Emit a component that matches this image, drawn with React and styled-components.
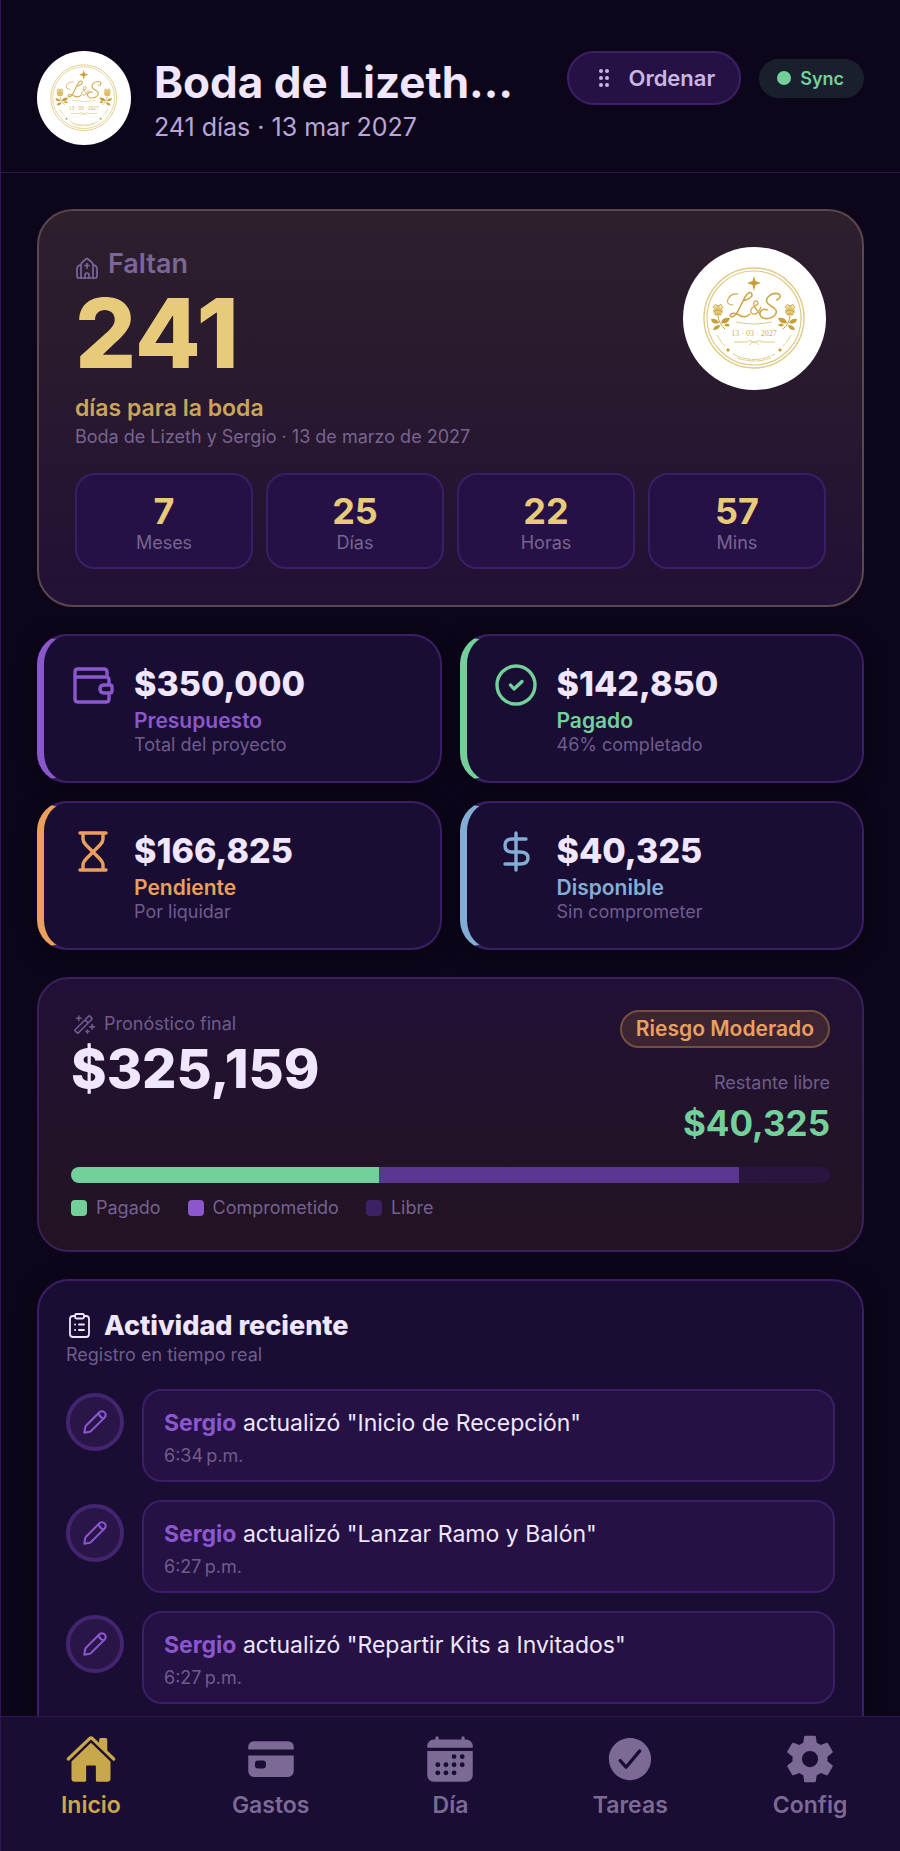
import React from 'react';
import styled, { createGlobalStyle } from 'styled-components';
import { IoHome, IoCard, IoCalendar, IoCheckmarkCircle, IoSettingsSharp } from 'react-icons/io5';
import { PiMagicWand } from 'react-icons/pi';

const GlobalStyle = createGlobalStyle`
	* {
		box-sizing: border-box;
	}
	html, body, #root {
		height: 100%;
	}
	body {
		margin: 0;
		background: #0d061b;
		color: #f0e6ff;
		font-family: Inter, "Noto Sans", sans-serif;
	}
	h1, h2, p, ul {
		margin: 0;
		padding: 0;
	}
`;

const Screen = styled.div`
	display: flex;
	flex-direction: column;
	height: 100vh;
	border-left: 1px solid #2f1755;
`;

const Header = styled.header`
	display: flex;
	align-items: flex-start;
	gap: 23px;
	padding: 51px 36px 26px;
	border-bottom: 1px solid #2c1747;
`;

const Avatar = styled.div`
	flex: none;
	width: ${props => props.$size}px;
	height: ${props => props.$size}px;
	border-radius: 50%;
	background: #fff;
	overflow: hidden;

	svg {
		display: block;
		width: 100%;
		height: 100%;
	}
`;

const HeaderText = styled.div`
	flex: 1;
	min-width: 0;
`;

const Title = styled.h1`
	padding-top: 5px;
	font-size: 44px;
	line-height: 52px;
	font-weight: 700;
	white-space: nowrap;
	overflow: hidden;
	text-overflow: ellipsis;
`;

const Subtitle = styled.p`
	font-size: 25px;
	line-height: 38px;
	color: #b9a6d9;
`;

const HeaderActions = styled.div`
	display: flex;
	align-items: center;
	gap: 18px;
`;

const SortButton = styled.button`
	display: flex;
	align-items: center;
	gap: 18px;
	height: 54px;
	padding: 0 24px 0 29px;
	border: 2px solid #3d2068;
	border-radius: 27px;
	background: #261145;
	color: #c9b6e4;
	font-family: inherit;
	font-size: 22px;
	font-weight: 600;
	cursor: pointer;
`;

const SyncBadge = styled.span`
	display: flex;
	align-items: center;
	gap: 9px;
	height: 39px;
	padding: 0 20px 0 18px;
	border-radius: 20px;
	background: #1a1f2e;
	color: #74d09a;
	font-size: 18px;
	font-weight: 600;
`;

const Dot = styled.i`
	width: 14px;
	height: 14px;
	border-radius: 50%;
	background: #74d09a;
`;

const Content = styled.main`
	flex: 1;
	min-height: 0;
	overflow: hidden;
	padding: 36px 36px 0;
	display: flex;
	flex-direction: column;
	gap: 27px;

	> * {
		flex: none;
	}
`;

const CountdownCard = styled.section`
	padding: 36px;
	border: 2px solid #5b474d;
	border-radius: 36px;
	background: linear-gradient(180deg, #2d1f2c 0%, #291a2e 40%, #221036 100%);
`;

const CountdownTop = styled.div`
	display: flex;
	justify-content: space-between;
`;

const Eyebrow = styled.div`
	display: flex;
	align-items: center;
	gap: 9px;
	font-size: 27px;
	line-height: 33px;
	font-weight: 600;
	color: #7a6699;

	svg {
		margin-top: 8px;
	}
`;

const BigNumber = styled.div`
	font-size: 96px;
	line-height: 106px;
	font-weight: 800;
	color: #e8cb7a;
`;

const GoldText = styled.p`
	padding-top: 6px;
	font-size: 23px;
	line-height: 33px;
	font-weight: 600;
	color: #c9a55c;
`;

const MutedText = styled.p`
	font-size: 18px;
	line-height: ${props => props.$line || 24}px;
	color: ${props => props.$color || '#6f5c8c'};
`;

const TimeGrid = styled.div`
	display: grid;
	grid-template-columns: repeat(4, 1fr);
	gap: 13px;
	margin-top: 24px;
`;

const TimeBox = styled.div`
	padding: 16px 0 12px;
	border: 2px solid #3a1f66;
	border-radius: 20px;
	background: #251145;
	text-align: center;
`;

const TimeValue = styled.div`
	font-size: 36px;
	line-height: 40px;
	font-weight: 700;
	color: #e8cb7a;
`;

const StatGrid = styled.div`
	display: grid;
	grid-template-columns: 1fr 1fr;
	gap: 18px;
`;

const StatCard = styled.section`
	display: flex;
	gap: 20px;
	padding: 27px 28px 24px;
	border: 2px solid #3a1f66;
	border-left: 7px solid ${props => props.$color};
	border-radius: 30px;
	background: #1a0d33;
	box-shadow: 0 4px 18px rgba(8, 0, 12, 0.6);
	color: ${props => props.$color};
`;

const StatIcon = styled.svg`
	flex: none;
	width: 42px;
	height: 42px;
	overflow: visible;
`;

const StatValue = styled.div`
	font-size: 34px;
	line-height: 42px;
	font-weight: 800;
	color: #f0e6ff;
`;

const StatLabel = styled.div`
	padding-top: 4px;
	font-size: 21px;
	line-height: 24px;
	font-weight: 600;
`;

const ForecastCard = styled.section`
	padding: 31px 32px 29px;
	border: 2px solid #38215a;
	border-radius: 32px;
	background: linear-gradient(180deg, #201036 0%, #221329 60%, #221222 100%);
`;

const ForecastTop = styled.div`
	display: flex;
	justify-content: space-between;
`;

const ForecastLabel = styled.div`
	display: flex;
	align-items: center;
	gap: 8px;
	font-size: 18px;
	line-height: 28px;
	color: #6f5c8c;
`;

const ForecastValue = styled.div`
	font-size: 54px;
	line-height: 62px;
	font-weight: 800;
`;

const ForecastSide = styled.div`
	display: flex;
	flex-direction: column;
	align-items: flex-end;
	text-align: right;
`;

const RiskBadge = styled.span`
	height: 38px;
	margin-bottom: 23px;
	padding: 0 14px;
	border: 2px solid #76503f;
	border-radius: 19px;
	background: #3d2433;
	font-size: 21px;
	line-height: 34px;
	font-weight: 600;
	color: #eb9f5e;
`;

const FreeAmount = styled.div`
	font-size: 35px;
	line-height: 56px;
	font-weight: 700;
	color: #74d09a;
`;

const Bar = styled.div`
	display: flex;
	height: 16px;
	margin-top: 16px;
	border-radius: 8px;
	overflow: hidden;
	background: #291540;
`;

const BarPart = styled.div`
	background: ${props => props.$color};
`;

const Legend = styled.ul`
	display: flex;
	gap: 27px;
	margin-top: 12px;
	list-style: none;
	font-size: 18px;
	line-height: 26px;
	color: #74618f;

	li {
		display: flex;
		align-items: center;
		gap: 9px;
	}
`;

const Swatch = styled.i`
	width: 16px;
	height: 16px;
	border-radius: 4px;
	background: ${props => props.$color};
`;

const ActivityCard = styled.section`
	padding: 27px 27px 60px;
	border: 2px solid #3a1f66;
	border-radius: 32px;
	background: #1a0d33;
	box-shadow: 0 4px 18px rgba(8, 0, 12, 0.6);
`;

const ActivityTitle = styled.h2`
	display: flex;
	align-items: center;
	gap: 11px;
	font-size: 27px;
	line-height: 35px;
	font-weight: 800;
`;

const ActivityList = styled.ul`
	display: flex;
	flex-direction: column;
	gap: 18px;
	margin-top: 22px;
	list-style: none;
`;

const ActivityRow = styled.li`
	display: flex;
	align-items: flex-start;
	gap: 18px;
`;

const ActivityIcon = styled.span`
	display: flex;
	flex: none;
	align-items: center;
	justify-content: center;
	width: 58px;
	height: 58px;
	margin-top: 4px;
	border: 4px solid #43246f;
	border-radius: 50%;
	background: #2a1548;
	color: #8a57cc;
`;

const ActivityBox = styled.div`
	flex: 1;
	padding: 16px 20px 8px;
	border: 2px solid #3a1f66;
	border-radius: 20px;
	background: #261145;
`;

const ActivityText = styled.p`
	font-size: 23px;
	line-height: 32px;

	b {
		font-weight: 700;
		color: #8a57cc;
	}
`;

const TabBar = styled.nav`
	display: flex;
	flex: none;
	height: 135px;
	padding-top: 16px;
	border-top: 1px solid #301550;
	background: #1a0d33;
`;

const Tab = styled.a`
	display: flex;
	flex: 1;
	flex-direction: column;
	align-items: center;
	gap: 6px;
	font-size: 23px;
	line-height: 28px;
	font-weight: 600;
	text-decoration: none;
	color: ${props => props.$active ? '#c9a84c' : '#7c6a96'};

	svg {
		display: block;
		width: 52px;
		height: 52px;
	}
`;

const Rose = () => (
	<g>
		<circle cx="35" cy="64" r="5" fill="#e3c87e" />
		<path d="M30 61 L32 57.500 L35 59 L38 57.500 L40 61 M31 65 Q35 61 39 65 M32 68 Q35 65 38 68" fill="none" stroke="#c8a03a" strokeWidth="1" />
		<path d="M35 69 Q36 77 42 82" fill="none" stroke="#c8a03a" strokeWidth="1" />
		<path d="M36 76 Q29 78 28 72 Q34 71 36 76Z M38 76 Q39 70 47 71 Q45 78 38 76Z M37 78 Q31 78 30 83 Q37 83 37 78Z M41 78 Q44 75 47 78 Q44 81 41 78Z" fill="#c8a03a" />
	</g>
);

const Monogram = () => (
	<svg viewBox="0 0 143 143" role="img" aria-label="L&S 13 03 2027">
		<g fill="none" stroke="#dfca86">
			<circle cx="71" cy="71" r="50" strokeWidth="1.400" />
			<circle cx="71" cy="71" r="47" strokeWidth="1.200" />
			<path d="M53 75 Q71 79 89 75 M51 95 H64 M79 95 H92 M64 95 Q67 92 71 96 Q75 92 79 95 M66 98 Q71 92 76 98" />
			<path d="M34 88 Q38 95 42 99 M108 88 Q104 95 100 99 M50 107 Q71 118 92 107 M54 111 Q71 117 88 111" strokeDasharray="9 1" />
		</g>
		<path d="M71 29 L72.500 34 L78 36 L72.500 38 L71 44 L69.500 38 L64 36 L69.500 34Z M45 101 l2 2 -2 2 -2 -2z M97 101 l2 2 -2 2 -2 -2z" fill="#c8a03a" />
		<g fill="none" stroke="#cda647" strokeWidth="1.600" strokeLinecap="round" strokeLinejoin="round">
			<path d="M50 58 Q43 58 45 52 Q48 46 55 47" strokeWidth="1.100" />
			<path d="M60 54 Q70 51 69 47 Q67 43 62 50 L56 62 Q53 69 49 70 Q46 69 48 67 Q51 65 56 68 Q62 72 67 67" />
			<path d="M94 53 Q99 50 96 47 Q90 45 85 50 Q81 55 88 59 Q96 63 92 68 Q87 73 80 71 Q75 68 78 64 Q81 61 84 63" />
			<path d="M78 60 Q75 68 70 67 Q66 65 69 61 L75 57 Q75 52 71 55 Q69 58 77 67" strokeWidth="1.200" />
		</g>
		<Rose />
		<g transform="translate(142 0) scale(-1 1)">
			<Rose />
		</g>
		<text x="71" y="89" textAnchor="middle" fontFamily="Liberation Serif, serif" fontSize="8" fill="#cfb05c">13 · 03 · 2027</text>
	</svg>
);

const lineProps = {
	fill: 'none',
	stroke: 'currentColor',
	strokeLinecap: 'round',
	strokeLinejoin: 'round',
};

const DragIcon = () => (
	<svg width="12" height="20" viewBox="0 0 12 20" fill="currentColor" aria-hidden="true">
		{[3, 10, 17].map(y => (
			<g key={y}>
				<circle cx="3" cy={y} r="2" />
				<circle cx="9" cy={y} r="2" />
			</g>
		))}
	</svg>
);

const ChurchIcon = () => (
	<svg width="24" height="24" viewBox="0 0 24 24" {...lineProps} strokeWidth="1.700" aria-hidden="true">
		<path d="M6 22 V9 Q6 7 7.500 6 L11 3 Q12 2 13 3 L16.500 6 Q18 7 18 9 V22" />
		<path d="M6 9 H5 Q2 10 2 13 V20 Q2 22 4 22 H20 Q22 22 22 20 V13 Q22 10 19 9 H18" />
		<path d="M10 22 V19 Q10 17 12 17 Q14 17 14 19 V22 M12 7.500 V12 M10 9.500 H14" />
	</svg>
);

const ClipboardIcon = () => (
	<svg width="27" height="27" viewBox="0 0 27 27" {...lineProps} strokeWidth="1.800" aria-hidden="true">
		<path d="M9 4 H7 Q4 4 4 7 V22 Q4 25 7 25 H20 Q23 25 23 22 V7 Q23 4 20 4 H18" />
		<rect x="9" y="2" width="9" height="4.500" rx="1.500" />
		<path d="M13 12.500 H18 M13 18 H18 M9 12.500 H9.100 M9 18 H9.100" />
	</svg>
);

const PencilIcon = () => (
	<svg width="26" height="26" viewBox="0 0 28 28" {...lineProps} strokeWidth="2.200" aria-hidden="true">
		<path d="M2.500 25.500 L3.500 19.500 Q3.800 18.500 4.500 17.800 L18.800 3.500 Q21 1.500 23.500 3 Q27 5.500 24.500 9 L10 23.500 Q9.300 24.200 8.300 24.500 Z" />
		<path d="M18 4.500 Q19 9 23.500 10" />
	</svg>
);

const statIcons = {
	wallet: <path d="M35 14 V9 Q35 6 32 6 H6 Q3 6 3 9 V36 Q3 39 6 39 H34 Q37 39 37 36 V30 M3 14 H34 Q37 14 37 17 V22 M38 22 H32 Q28 22 28 26 Q28 30 32 30 H38 Q40 30 40 28 V24 Q40 22 38 22Z" />,
	check: (
		<>
			<circle cx="21" cy="22" r="19" />
			<path d="M15.500 22 L19 26 L27 18.500" />
		</>
	),
	hourglass: <path d="M8 3 H34 M8 40 H34 M11 3 V9 Q11 12 14 15 L27 28 Q31 32 31 35 V40 M31 3 V9 Q31 12 28 15 L15 28 Q11 32 11 35 V40" />,
	dollar: <path d="M21 3 V40 M31 9 H17 Q10 9 10 15.500 Q10 22 17 22 H25 Q33 22 33 28 Q33 34 25 34 H10" />,
};

const times = [
	{ value: '7', label: 'Meses' },
	{ value: '25', label: 'Días' },
	{ value: '22', label: 'Horas' },
	{ value: '57', label: 'Mins' },
];

const stats = [
	{ icon: 'wallet', value: '$350,000', label: 'Presupuesto', note: 'Total del proyecto', color: '#8a57cc' },
	{ icon: 'check', value: '$142,850', label: 'Pagado', note: '46% completado', color: '#74d09a' },
	{ icon: 'hourglass', value: '$166,825', label: 'Pendiente', note: 'Por liquidar', color: '#eb9f5e' },
	{ icon: 'dollar', value: '$40,325', label: 'Disponible', note: 'Sin comprometer', color: '#84add6' },
];

const budget = { total: 352000, paid: 142850, committed: 166825 };

const activities = [
	{ user: 'Sergio', text: 'actualizó "Inicio de Recepción"', time: '6:34\u202fp.m.' },
	{ user: 'Sergio', text: 'actualizó "Lanzar Ramo y Balón"', time: '6:27\u202fp.m.' },
	{ user: 'Sergio', text: 'actualizó "Repartir Kits a Invitados"', time: '6:27\u202fp.m.' },
];

const tabs = [
	{ label: 'Inicio', href: '#inicio', Icon: IoHome },
	{ label: 'Gastos', href: '#gastos', Icon: IoCard },
	{ label: 'Día', href: '#dia', Icon: IoCalendar },
	{ label: 'Tareas', href: '#tareas', Icon: IoCheckmarkCircle },
	{ label: 'Config', href: '#config', Icon: IoSettingsSharp },
];

const App = () => {
	const percent = (amount) => `${amount / budget.total * 100}%`;

	return (
		<Screen>
			<GlobalStyle />
			<Header>
				<Avatar $size={94}><Monogram /></Avatar>
				<HeaderText>
					<Title>Boda de Lizeth…</Title>
					<Subtitle>241 días · 13 mar 2027</Subtitle>
				</HeaderText>
				<HeaderActions>
					<SortButton type="button"><DragIcon />Ordenar</SortButton>
					<SyncBadge><Dot />Sync</SyncBadge>
				</HeaderActions>
			</Header>

			<Content>
				<CountdownCard>
					<CountdownTop>
						<div>
							<Eyebrow><ChurchIcon />Faltan</Eyebrow>
							<BigNumber>241</BigNumber>
							<GoldText>días para la boda</GoldText>
							<MutedText $color="#78648f">Boda de Lizeth y Sergio · 13 de marzo de 2027</MutedText>
						</div>
						<Avatar $size={143}><Monogram /></Avatar>
					</CountdownTop>
					<TimeGrid>
						{times.map(item => (
							<TimeBox key={item.label}>
								<TimeValue>{item.value}</TimeValue>
								<MutedText $color="#78648f">{item.label}</MutedText>
							</TimeBox>
						))}
					</TimeGrid>
				</CountdownCard>

				<StatGrid>
					{stats.map(item => (
						<StatCard key={item.label} $color={item.color}>
							<StatIcon viewBox="0 0 42 42" {...lineProps} strokeWidth="3.400" aria-hidden="true">
								{statIcons[item.icon]}
							</StatIcon>
							<div>
								<StatValue>{item.value}</StatValue>
								<StatLabel>{item.label}</StatLabel>
								<MutedText>{item.note}</MutedText>
							</div>
						</StatCard>
					))}
				</StatGrid>

				<ForecastCard>
					<ForecastTop>
						<div>
							<ForecastLabel><PiMagicWand size={25} />Pronóstico final</ForecastLabel>
							<ForecastValue>$325,159</ForecastValue>
						</div>
						<ForecastSide>
							<RiskBadge>Riesgo Moderado</RiskBadge>
							<MutedText>Restante libre</MutedText>
							<FreeAmount>$40,325</FreeAmount>
						</ForecastSide>
					</ForecastTop>
					<Bar>
						<BarPart $color="#74d09a" style={{ width: percent(budget.paid) }} />
						<BarPart $color="#5c358f" style={{ width: percent(budget.committed) }} />
					</Bar>
					<Legend>
						<li><Swatch $color="#74d09a" />Pagado</li>
						<li><Swatch $color="#8a57cc" />Comprometido</li>
						<li><Swatch $color="#3c2264" />Libre</li>
					</Legend>
				</ForecastCard>

				<ActivityCard>
					<ActivityTitle><ClipboardIcon />Actividad reciente</ActivityTitle>
					<MutedText>Registro en tiempo real</MutedText>
					<ActivityList>
						{activities.map(item => (
							<ActivityRow key={item.text}>
								<ActivityIcon><PencilIcon /></ActivityIcon>
								<ActivityBox>
									<ActivityText><b>{item.user}</b> {item.text}</ActivityText>
									<MutedText $line={33}>{item.time}</MutedText>
								</ActivityBox>
							</ActivityRow>
						))}
					</ActivityList>
				</ActivityCard>
			</Content>

			<TabBar>
				{tabs.map(({ label, href, Icon }, i) => (
					<Tab key={label} href={href} $active={i === 0}>
						<Icon />
						{label}
					</Tab>
				))}
			</TabBar>
		</Screen>
	);
}

export default App;
